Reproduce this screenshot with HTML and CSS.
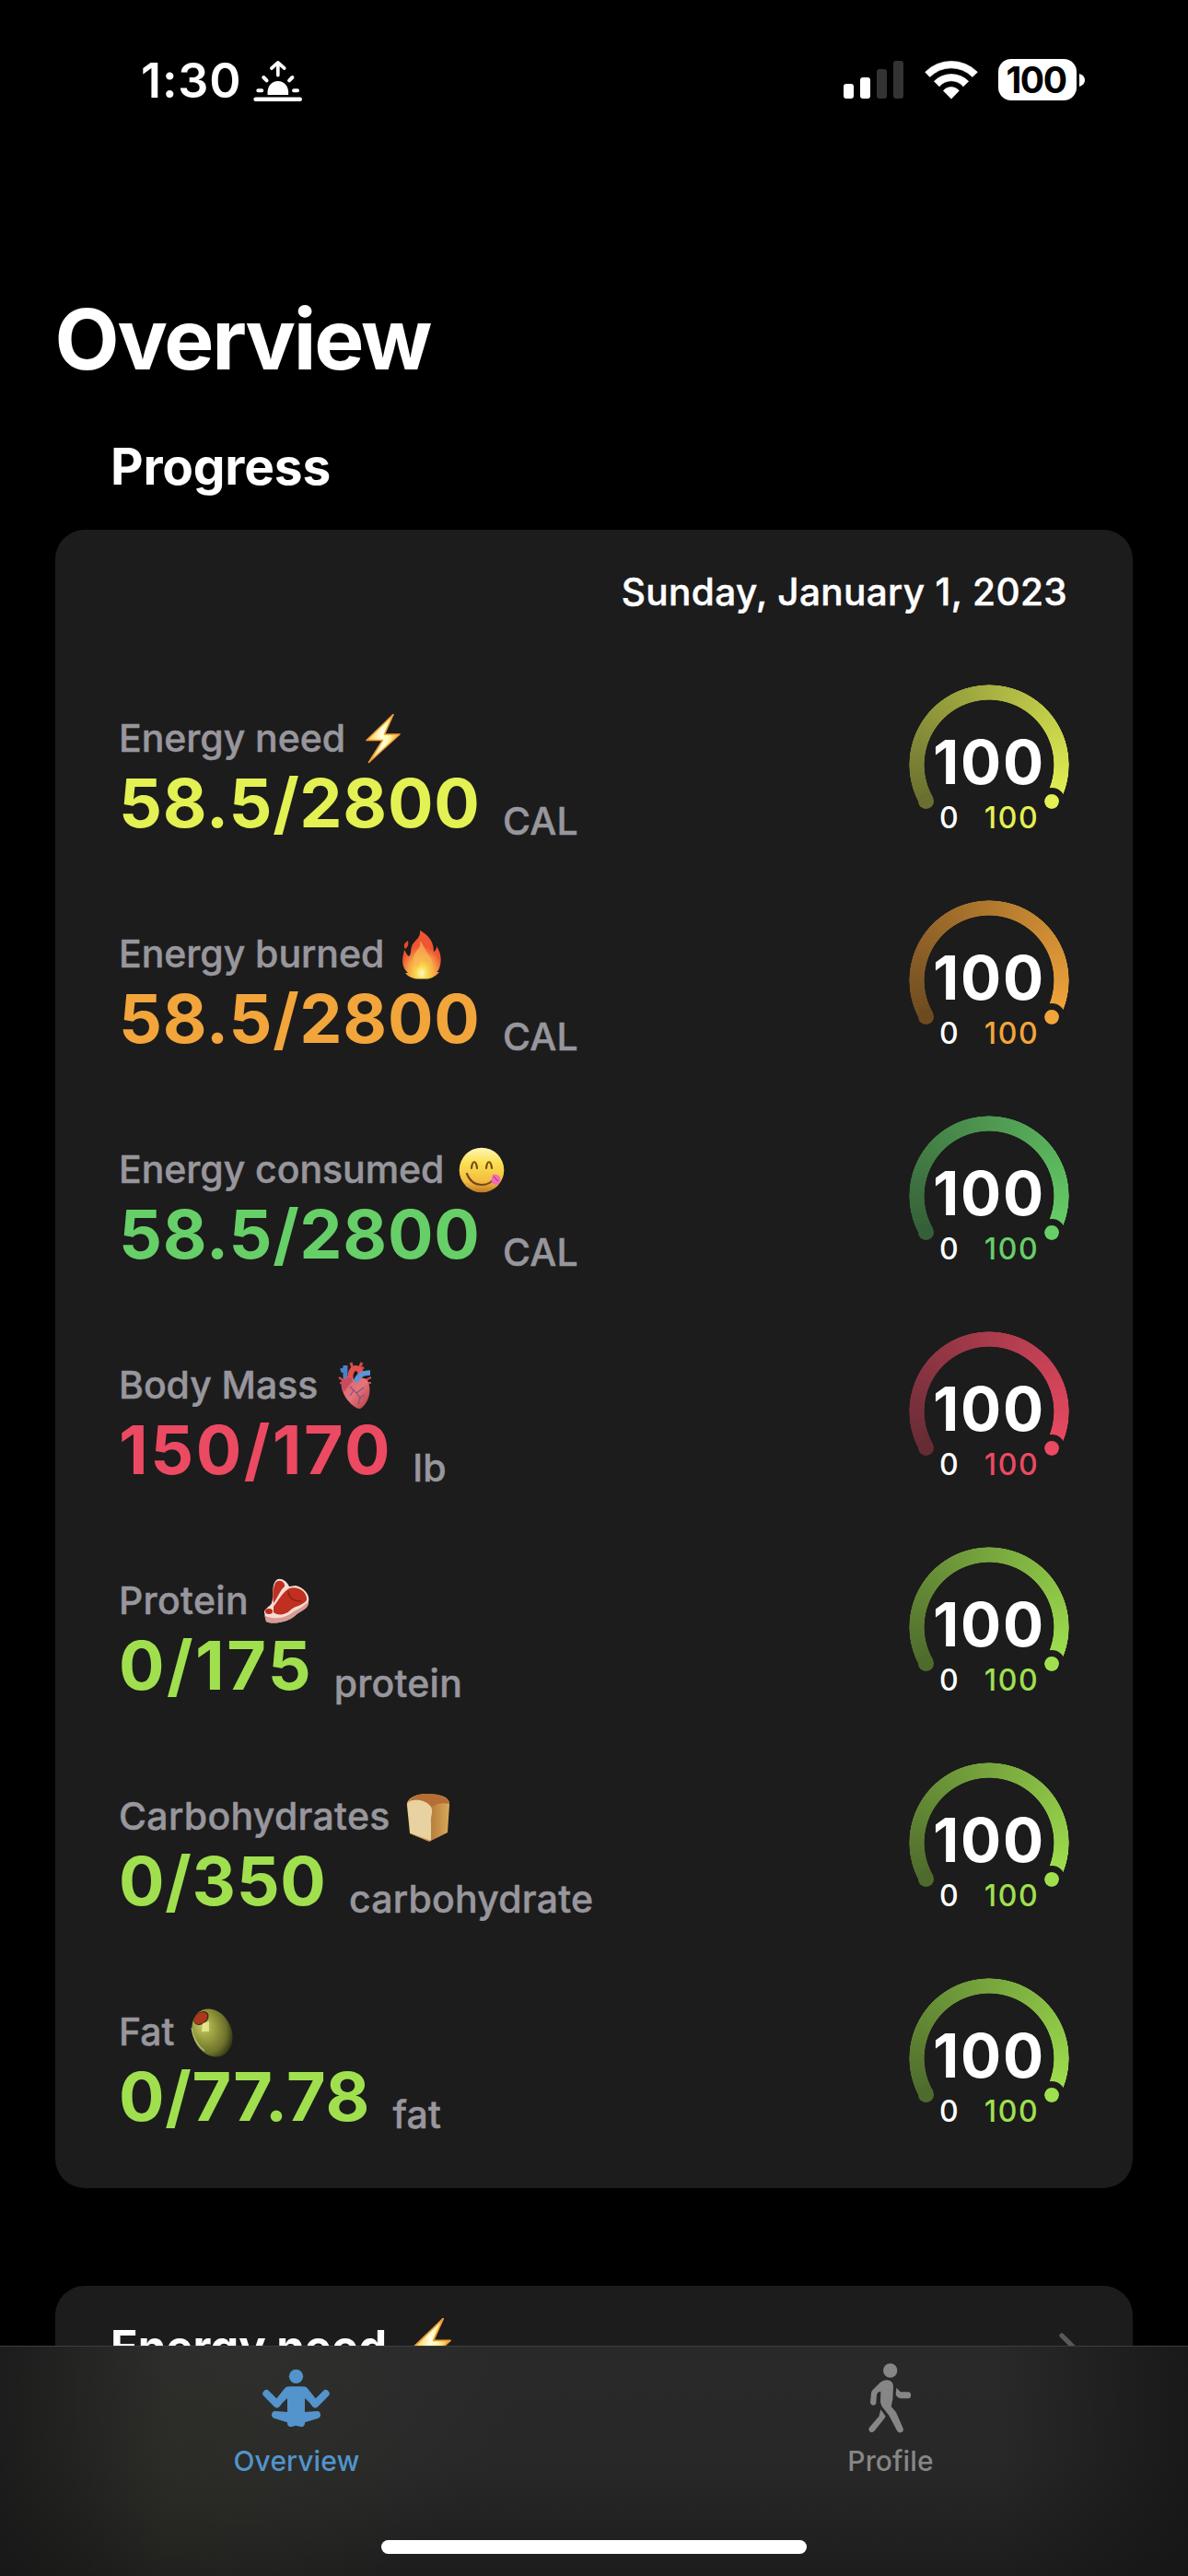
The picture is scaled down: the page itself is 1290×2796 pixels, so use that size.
FILE: index.html
```html
<!DOCTYPE html>
<html lang="en">
<head>
<meta charset="utf-8">
<title>Overview</title>
<link rel="stylesheet" href="styles.css">
</head>
<body>
<svg class="defs" aria-hidden="true">
  <defs>
    <linearGradient id="bolt-fill" x1="0" y1="0" x2="1" y2="0"><stop offset=".1" stop-color="#ffd65a"/><stop offset=".45" stop-color="#fffde0"/><stop offset=".65" stop-color="#fff9a8"/><stop offset="1" stop-color="#f6a733"/></linearGradient>
    <radialGradient id="fire-fill" cx=".5" cy=".88" r=".85"><stop offset="0" stop-color="#fff9c4"/><stop offset=".18" stop-color="#fbd84a"/><stop offset=".42" stop-color="#f5a145"/><stop offset=".65" stop-color="#ee5532"/></radialGradient>
    <linearGradient id="face-fill" x1="0" y1="0" x2="0" y2="1"><stop offset="0" stop-color="#fff6b5"/><stop offset=".35" stop-color="#fae04f"/><stop offset=".75" stop-color="#f3bb40"/><stop offset="1" stop-color="#c07a24"/></linearGradient>
    <linearGradient id="heart-fill" x1="0" y1="0" x2="1" y2="1"><stop offset="0" stop-color="#d9606a"/><stop offset=".5" stop-color="#e4757a"/><stop offset="1" stop-color="#b53a42"/></linearGradient>
    <linearGradient id="crust-fill" x1="0" y1="0" x2="1" y2="0"><stop offset="0" stop-color="#f0c877"/><stop offset=".6" stop-color="#b9823f"/><stop offset="1" stop-color="#d9a95c"/></linearGradient>
    <radialGradient id="olive-fill" cx=".36" cy=".3" r=".75"><stop offset="0" stop-color="#c5cc6a"/><stop offset=".4" stop-color="#959b3c"/><stop offset=".75" stop-color="#6d722c"/><stop offset="1" stop-color="#2e3212"/></radialGradient>
    <symbol id="bolt" viewBox="0 0 54 54"><path d="M38 .5 9 28.5 26.5 28.5 11.5 52.5 45 22 28.5 22Z" fill="url(#bolt-fill)" stroke="#ee9d33" stroke-width="1.6" stroke-linejoin="round"/></symbol>
  </defs>
</svg>

<header class="status">
  <div class="status-left">
    <span class="clock">1:30</span>
    <svg class="sunrise" viewBox="464 74 160 138" fill="none" stroke="#fff" stroke-linecap="round" stroke-linejoin="round"><path d="M472 202.500H617" stroke-width="14"/><path d="M511 188C508 160 525 143 545 143S582 160 579 188Z" fill="#fff" stroke="none"/><path d="M480 174H492M597 174H609M498 131 508 141M592 131 582 141" stroke-width="12"/><path d="M545 83V124M524 101 545 82 566 101" stroke-width="11"/></svg>
  </div>
  <div class="status-right">
    <svg class="signal" viewBox="0 0 65 41"><rect y="25" width="11" height="16" rx="3" fill="#fff"/><rect x="18" y="18" width="11" height="23" rx="3" fill="#fff"/><rect x="36" y="9" width="11" height="32" rx="3" fill="#333"/><rect x="54" width="11" height="41" rx="3" fill="#333"/></svg>
    <svg class="wifi" viewBox="341 74 174 128" fill="#fff" stroke="#fff" stroke-width="2" stroke-linejoin="round"><path d="M343 113A120 120 0 0 1 513 113L497 129A98 98 0 0 0 358 129Z"/><path d="M372 143A80 80 0 0 1 484 143L467 160A51 51 0 0 0 389 160Z"/><path d="M402 174A33.500 33.500 0 0 1 453 174L428 200Z"/></svg>
    <div class="battery"><span class="battery-level">100</span></div>
    <svg class="battery-nub" viewBox="0 0 6 14"><path d="M0 0Q6 2 6 7T0 14Z" fill="#fff"/></svg>
  </div>
</header>

<main>
  <h1>Overview</h1>
  <h2>Progress</h2>

  <section class="card progress">
    <p class="date">Sunday, January 1, 2023</p>

    <article class="metric yellow">
      <div class="info">
        <div class="label">Energy need <svg class="emoji"><use href="#bolt"/></svg></div>
        <div class="reading"><strong>58.5/2800</strong><span class="unit">CAL</span></div>
      </div>
      <div class="gauge"><i class="arc"></i><b>100</b><div class="range"><span>0</span><em>100</em></div></div>
    </article>

    <article class="metric orange">
      <div class="info">
        <div class="label">Energy burned
          <svg class="emoji" viewBox="0 0 54 54"><path d="M25 .8C32 5 40 11 40 24C42 23 43 21 43 18C48 25 49 34 46 42C45 45 43 46 43 46L46 46C43 50 38 53 33 53.500H22C16 53 11 50 9 47L12 47C6 42 5 34 7 27L8 22C10 25 11 28 13 29C16 27 14 22 17 16C20 11 26 9 25 .8Z" fill="url(#fire-fill)"/><path d="M12 12C7 15 7 18 9 21C12 19 13 16 12 12Z" fill="#e9492c"/><path d="M25 12C30 18 31 24 36 30C40 36 38 44 34 47C39 41 35 34 31 31C28 35 24 34 23 42C18 37 16 31 20 25C24 20 26 18 25 12Z" fill="#f8b657" opacity=".7"/></svg>
        </div>
        <div class="reading"><strong>58.5/2800</strong><span class="unit">CAL</span></div>
      </div>
      <div class="gauge"><i class="arc"></i><b>100</b><div class="range"><span>0</span><em>100</em></div></div>
    </article>

    <article class="metric green">
      <div class="info">
        <div class="label">Energy consumed
          <svg class="emoji" viewBox="0 0 54 54"><circle cx="27" cy="27" r="24.300" fill="url(#face-fill)"/><path d="M16 25C17 16 21 16 22 25M32 25C33 16 37 16 38 25M11 31C17 47 36 46 42 34" fill="none" stroke="#76491a" stroke-width="2.200" stroke-linecap="round"/><path d="M39 32C44 31 49 34 47 39C46 43 42 44 38 41C37 38 38 35 39 32Z" fill="#f06cb4"/><path d="M40 34 45 39" stroke="#c83d86" stroke-width="1.200"/></svg>
        </div>
        <div class="reading"><strong>58.5/2800</strong><span class="unit">CAL</span></div>
      </div>
      <div class="gauge"><i class="arc"></i><b>100</b><div class="range"><span>0</span><em>100</em></div></div>
    </article>

    <article class="metric red">
      <div class="info">
        <div class="label">Body Mass
          <svg class="emoji" viewBox="0 0 54 54"><path d="M11 11 16 9M16 5V20" stroke="#4a82c8" stroke-width="5"/><path d="M22 2 24 8M34 2 31 8M36 7 33 9" stroke="#d64a45" stroke-width="3"/><path d="M9 18 13 21M10 24 14 24M44 18 38 21M44 24 38 24" stroke="#cf4b50" stroke-width="2.200"/><path d="M22 22C20 10 26 6 30 9C34 11 32 16 31 20" fill="none" stroke="#e3504c" stroke-width="6"/><path d="M12 22C16 15 23 16 27 23C33 16 41 18 42 27C44 39 38 49 32 52C26 53 9 37 12 22Z" fill="url(#heart-fill)"/><path d="M27 23C30 16 34 13 43 13" fill="none" stroke="#5b95d8" stroke-width="5.500"/><path d="M12 22C18 16 23 17 24 22L14 34C12 30 11 26 12 22Z" fill="#c94b62"/><path d="M21 28 28 35 36 29M28 35 32 40 30 47M32 40 37 37M25 32 21 38" fill="none" stroke="#7d5383" stroke-width="1.100"/></svg>
        </div>
        <div class="reading"><strong class="wide">150/170</strong><span class="unit">lb</span></div>
      </div>
      <div class="gauge"><i class="arc"></i><b>100</b><div class="range"><span>0</span><em>100</em></div></div>
    </article>

    <article class="metric lime">
      <div class="info">
        <div class="label loose">Protein
          <svg class="emoji" viewBox="0 0 54 54"><path d="M3 39C3 35 9 33 11 29C14 20 10 10 16 4C20 1 27 4 30 11L37 10C46 12 53 20 51 28C50 36 42 37 36 43C30 49 12 53 5 49Z" fill="#f6dcd3"/><path d="M3 42C10 47 23 46 31 41C37 36 44 35 51 27C52 36 42 37 36 43C30 49 12 53 5 49Z" fill="#d89a92"/><path d="M15 7C19 2 26 6 25 11C20 15 17 24 13 29C12 21 12 14 15 7ZM13 33C19 25 23 17 30 13C41 10 50 18 49 26C43 33 37 31 31 37C26 42 17 43 13 39Z" fill="#c02f20"/><path d="M29 16C29 23 35 27 43 27" fill="none" stroke="#8e2118" stroke-width="1.500"/><ellipse cx="8" cy="38" rx="4" ry="3" fill="#b82c22"/></svg>
        </div>
        <div class="reading"><strong class="wide">0/175</strong><span class="unit">protein</span></div>
      </div>
      <div class="gauge"><i class="arc"></i><b>100</b><div class="range"><span>0</span><em>100</em></div></div>
    </article>

    <article class="metric lime">
      <div class="info">
        <div class="label loose">Carbohydrates
          <svg class="emoji" viewBox="0 0 54 54"><path d="M4 15C3 8 12 2 26 2C41 2 51 6 50 14L48 44 28 54 7 45Z" fill="url(#crust-fill)"/><path d="M5 11C10 3 20 2 27 2C39 2 49 6 50 13C42 11 33 14 30 17C25 10 12 6 5 11Z" fill="#b56e33"/><path d="M5 13C8 6 25 8 30 16C33 22 29 27 30 33V53L7 44C7 35 7 28 5 22Z" fill="#e8d2a2"/></svg>
        </div>
        <div class="reading"><strong>0/350</strong><span class="unit">carbohydrate</span></div>
      </div>
      <div class="gauge"><i class="arc"></i><b>100</b><div class="range"><span>0</span><em>100</em></div></div>
    </article>

    <article class="metric lime">
      <div class="info">
        <div class="label">Fat
          <svg class="emoji" viewBox="0 0 54 54"><ellipse cx="27.500" cy="27.500" rx="21" ry="27" transform="rotate(-24 27.500 27.500)" fill="url(#olive-fill)"/><path d="M5 22C6 32 12 42 19 47" fill="none" stroke="#c2c780" stroke-width="1.300" opacity=".8"/><ellipse cx="15.500" cy="11.500" rx="9" ry="6.500" transform="rotate(-38 15.500 11.500)" fill="#3f2410"/><ellipse cx="15" cy="11.500" rx="8" ry="5.600" transform="rotate(-38 15 11.500)" fill="#a9381d"/><path d="M17 17 24 15 24 26H16Z" fill="#f0f29a" opacity=".75"/></svg>
        </div>
        <div class="reading"><strong>0/77.78</strong><span class="unit">fat</span></div>
      </div>
      <div class="gauge"><i class="arc"></i><b>100</b><div class="range"><span>0</span><em>100</em></div></div>
    </article>
  </section>

  <section class="card detail">
    <h3>Energy need <svg class="emoji"><use href="#bolt"/></svg></h3>
    <svg class="chevron" viewBox="0 0 20 34"><path d="M3 3 17 17 3 31" fill="none" stroke="#59595c" stroke-width="5.300" stroke-linecap="round" stroke-linejoin="round"/></svg>
  </section>
</main>

<nav class="tabbar">
  <a class="tab active">
    <svg class="meditate" viewBox="735 333 219 192" fill="currentColor"><circle cx="844.500" cy="358" r="23"/><path d="M808 399Q815 391 824 391H866Q875 391 882 399L885 440 873 429V474L912 471Q924 471 924 483 924 492 915 495L873 508V512Q871 523 859 522L844 518 830 522Q818 523 816 512V508L775 495Q765 492 765 483 765 471 778 471L816 474V429L804 440Z"/><path d="M748 414 782 448 817 404M941 414 907 448 872 404" fill="none" stroke="currentColor" stroke-width="24" stroke-linecap="round" stroke-linejoin="round"/></svg>
    <span>Overview</span>
  </a>
  <a class="tab">
    <svg class="walk" viewBox="308 314 140 228" fill="currentColor"><circle cx="379" cy="338" r="23"/><path d="M346 377Q355 369 367 369 388 370 389 389L387 432 382 455 398 474 421 526Q424 537 413 540 405 541 401 534L375 484 352 455Q347 448 347 438L348 406 341 408 335 415 333 443Q332 451 323 451 314 450 314 441L317 411Q318 405 322 401Z"/><path d="M399 394 413 408H439Q447 410 447 418 447 428 438 429H412Q404 428 398 419L397 415Z"/><path d="M348 465 364 487 360 494 327 535Q321 541 314 538 306 532 311 523L342 487Z"/></svg>
    <span>Profile</span>
  </a>
  <div class="home-indicator"></div>
</nav>
</body>
</html>
```

FILE: styles.css
```css
*, *::before, *::after { box-sizing: border-box; margin: 0; padding: 0; }

body {
  width: 1290px;
  height: 2796px;
  overflow: hidden;
  background: #000;
  color: #fff;
  font-family: Inter, "Liberation Sans", sans-serif;
}

svg { display: block; flex: none; }
.defs { width: 0; height: 0; position: absolute; }

/* Status bar */
.status {
  display: flex;
  justify-content: space-between;
  height: 318px;
  padding: 58px 112px 0 153px;
}
.status-left, .status-right { display: flex; align-items: flex-start; }
.clock { font-size: 52px; font-weight: 600; line-height: 60px; letter-spacing: 0.9px; }
.sunrise { width: 53px; height: 46px; margin: 7px 0 0 12px; }
.signal { width: 65px; height: 41px; margin-top: 8px; }
.wifi { width: 58px; height: 43px; margin: 7px 0 0 23px; }
.battery {
  width: 85px;
  height: 45px;
  margin: 6px 0 0 22px;
  border-radius: 14px;
  background: #fff;
  color: #000;
  text-align: center;
}
.battery-level { font-size: 39px; font-weight: 700; line-height: 45px; letter-spacing: -1.4px; margin-left: -3px; }
.battery-nub { width: 6px; height: 14px; margin: 22px 0 0 3px; }

/* Headings */
h1 { margin-left: 59.5px; font-size: 91px; font-weight: 680; line-height: 101px; letter-spacing: -2.2px; }
h2 { margin: 55px 0 37px 120px; font-size: 55px; font-weight: 650; line-height: 64px; letter-spacing: -0.2px; }

/* Cards */
.card { margin: 0 60px; border-radius: 32px; background: #1c1c1c; }
.progress { padding: 44px 69px 54px 69px; }
.date { margin-bottom: 76px; padding-right: 2px; text-align: right; font-size: 40.5px; font-weight: 500; line-height: 48px; letter-spacing: 0.36px; -webkit-text-stroke: 0.5px; }

/* Metric rows */
.metric { display: flex; justify-content: space-between; height: 174px; }
.metric + .metric { margin-top: 60px; }
.yellow { --tone: #e3f153; --low: #6a6f2f; }
.orange { --tone: #f2a53b; --low: #6d4b21; }
.green { --tone: #67cf68; --low: #355f38; }
.red { --tone: #eb4a62; --low: #652c35; }
.lime { --tone: #a0e04f; --low: #4e6a2c; }

.info { padding-top: 34px; }
.label { display: flex; gap: 14px; height: 48px; color: #98969d; font-size: 41px; font-weight: 500; line-height: 48px; letter-spacing: -0.05px; -webkit-text-stroke: 0.5px; }
.label.loose { letter-spacing: 0.3px; }
.emoji { width: 54px; height: 54px; margin-top: -2.5px; }
.reading { display: flex; align-items: flex-end; gap: 24.500px; height: 90px; color: #98969d; }
.reading strong { height: 83px; color: var(--tone); font-size: 73.5px; font-weight: 650; line-height: 80px; letter-spacing: 0.7px; }
.reading strong.wide { letter-spacing: 2.5px; margin-right: -2px; }
.unit { font-size: 41px; font-weight: 500; line-height: 48px; letter-spacing: 0.2px; -webkit-text-stroke: 0.5px; }

/* Gauges: a 240 degree ring, its low-end cap, and the marker dot with a gap round it */
.gauge { position: relative; width: 174px; height: 174px; }
.arc, .arc::after, .arc::before { position: absolute; border-radius: 50%; }
.arc { inset: 0; }
.arc::before {
  content: "";
  inset: 0;
  background: conic-gradient(from 240deg, var(--low), var(--tone) 238deg, transparent 238deg);
  -webkit-mask: radial-gradient(circle 87px, transparent 70px, #000 70.7px, #000 86.4px, transparent 87px);
  mask: radial-gradient(circle 87px, transparent 70px, #000 70.7px, #000 86.4px, transparent 87px);
}
.arc::after {
  content: "";
  left: 10.2px;
  top: 118.2px;
  width: 16.6px;
  height: 16.6px;
  background: var(--low);
}
.gauge::after {
  content: "";
  position: absolute;
  left: 140px;
  top: 111.5px;
  width: 30px;
  height: 30px;
  border: 7px solid #1c1c1c;
  border-radius: 50%;
  background: var(--tone);
  background-clip: padding-box;
}
.gauge b { display: block; position: relative; padding-top: 50px; font-size: 65.5px; line-height: 70px; letter-spacing: 1.8px; text-align: center; }
.range { position: relative; z-index: 1; display: flex; gap: 28px; padding-left: 33px; margin-top: 7px; font-size: 32px; font-weight: 500; line-height: 36px; }
.range em { color: var(--tone); font-style: normal; letter-spacing: 1.7px; }

/* Next card, running under the tab bar */
.detail { display: flex; justify-content: space-between; height: 400px; margin-top: 106px; padding: 37px 60px 0 60px; }
h3 { display: flex; gap: 19px; height: 60px; font-size: 49px; font-weight: 680; line-height: 60px; }
.detail .emoji { width: 60px; height: 60px; margin-top: -2px; }
.chevron { width: 20px; height: 34px; margin-top: 14px; }

/* Tab bar */
.tabbar {
  position: fixed;
  left: 0;
  right: 0;
  bottom: 0;
  display: grid;
  grid-template-columns: 1fr 1fr;
  align-content: start;
  height: 250px;
  padding-top: 18px;
  border-top: 1px solid #3d3d3d;
  background:
    linear-gradient(90deg, rgba(20,20,20,.6), rgba(20,20,20,0) 14%, rgba(20,20,20,0) 84%, rgba(20,20,20,.75)),
    radial-gradient(circle 260px at 200px 130px, rgba(42,44,30,.35), rgba(42,44,30,0)),
    radial-gradient(circle 300px at 260px 0, rgba(54,54,54,.5), rgba(54,54,54,0)),
    linear-gradient(#292929, #282828 50%, #1d1d1d);
}
.tab { display: flex; flex-direction: column; align-items: center; color: #868686; }
.tab.active { color: #5294cb; }
.meditate { width: 73px; height: 64px; margin: 6px 2px 6px 0; }
.walk { width: 46.700px; height: 76px; margin-right: 3px; }
.tab span { margin: 12px 1px 0 0; font-size: 30px; font-weight: 500; line-height: 36px; letter-spacing: 0.1px; }
.home-indicator { grid-column: 1 / -1; justify-self: center; width: 462px; height: 15px; margin-top: 68px; border-radius: 8px; background: #fff; }
```
